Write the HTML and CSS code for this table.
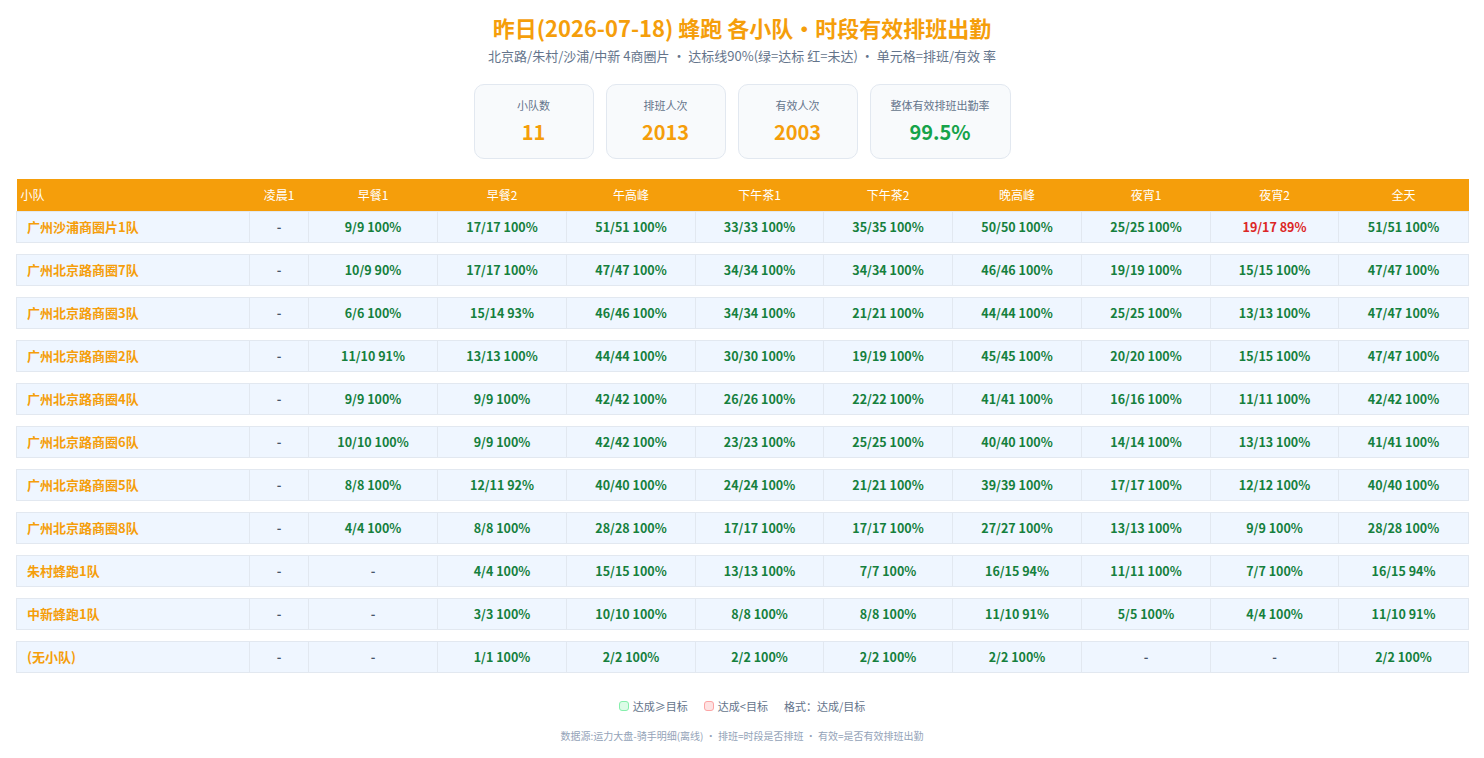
FILE: index.html
```html
<!DOCTYPE html>
<html lang="zh-CN">
<head>
<meta charset="utf-8">
<title>蜂跑 各小队・时段有效排班出勤</title>
<link rel="stylesheet" href="styles.css">
</head>
<body>
<div class="page">
  <header class="head">
    <h1 class="title">昨日(2026-07-18) 蜂跑 各小队・时段有效排班出勤</h1>
    <p class="sub">北京路/朱村/沙浦/中新 4商圈片 ・ 达标线90%(绿=达标 红=未达) ・ 单元格=排班/有效 率</p>
  </header>

  <section class="cards">
    <div class="card"><div class="card-label">小队数</div><div class="card-val">11</div></div>
    <div class="card"><div class="card-label">排班人次</div><div class="card-val">2013</div></div>
    <div class="card"><div class="card-label">有效人次</div><div class="card-val">2003</div></div>
    <div class="card wide"><div class="card-label">整体有效排班出勤率</div><div class="card-val good">99.5%</div></div>
  </section>

  <table class="grid">
    <colgroup>
      <col class="c-team"><col class="c-s"><col class="c-m"><col class="c-m"><col class="c-m"><col class="c-n"><col class="c-m"><col class="c-m"><col class="c-m"><col class="c-n"><col class="c-l">
    </colgroup>
    <thead>
      <tr>
        <th class="th-team">小队</th><th>凌晨1</th><th>早餐1</th><th>早餐2</th><th>午高峰</th><th>下午茶1</th><th>下午茶2</th><th>晚高峰</th><th>夜宵1</th><th>夜宵2</th><th>全天</th>
      </tr>
    </thead>
    <tbody>
      <tr><td class="team">广州沙浦商圈片1队</td><td class="na">-</td><td class="ok">9/9 100%</td><td class="ok">17/17 100%</td><td class="ok">51/51 100%</td><td class="ok">33/33 100%</td><td class="ok">35/35 100%</td><td class="ok">50/50 100%</td><td class="ok">25/25 100%</td><td class="bad">19/17 89%</td><td class="ok">51/51 100%</td></tr>
      <tr class="sp"><td colspan="11"></td></tr>
      <tr><td class="team">广州北京路商圈7队</td><td class="na">-</td><td class="ok">10/9 90%</td><td class="ok">17/17 100%</td><td class="ok">47/47 100%</td><td class="ok">34/34 100%</td><td class="ok">34/34 100%</td><td class="ok">46/46 100%</td><td class="ok">19/19 100%</td><td class="ok">15/15 100%</td><td class="ok">47/47 100%</td></tr>
      <tr class="sp"><td colspan="11"></td></tr>
      <tr><td class="team">广州北京路商圈3队</td><td class="na">-</td><td class="ok">6/6 100%</td><td class="ok">15/14 93%</td><td class="ok">46/46 100%</td><td class="ok">34/34 100%</td><td class="ok">21/21 100%</td><td class="ok">44/44 100%</td><td class="ok">25/25 100%</td><td class="ok">13/13 100%</td><td class="ok">47/47 100%</td></tr>
      <tr class="sp"><td colspan="11"></td></tr>
      <tr><td class="team">广州北京路商圈2队</td><td class="na">-</td><td class="ok">11/10 91%</td><td class="ok">13/13 100%</td><td class="ok">44/44 100%</td><td class="ok">30/30 100%</td><td class="ok">19/19 100%</td><td class="ok">45/45 100%</td><td class="ok">20/20 100%</td><td class="ok">15/15 100%</td><td class="ok">47/47 100%</td></tr>
      <tr class="sp"><td colspan="11"></td></tr>
      <tr><td class="team">广州北京路商圈4队</td><td class="na">-</td><td class="ok">9/9 100%</td><td class="ok">9/9 100%</td><td class="ok">42/42 100%</td><td class="ok">26/26 100%</td><td class="ok">22/22 100%</td><td class="ok">41/41 100%</td><td class="ok">16/16 100%</td><td class="ok">11/11 100%</td><td class="ok">42/42 100%</td></tr>
      <tr class="sp"><td colspan="11"></td></tr>
      <tr><td class="team">广州北京路商圈6队</td><td class="na">-</td><td class="ok">10/10 100%</td><td class="ok">9/9 100%</td><td class="ok">42/42 100%</td><td class="ok">23/23 100%</td><td class="ok">25/25 100%</td><td class="ok">40/40 100%</td><td class="ok">14/14 100%</td><td class="ok">13/13 100%</td><td class="ok">41/41 100%</td></tr>
      <tr class="sp"><td colspan="11"></td></tr>
      <tr><td class="team">广州北京路商圈5队</td><td class="na">-</td><td class="ok">8/8 100%</td><td class="ok">12/11 92%</td><td class="ok">40/40 100%</td><td class="ok">24/24 100%</td><td class="ok">21/21 100%</td><td class="ok">39/39 100%</td><td class="ok">17/17 100%</td><td class="ok">12/12 100%</td><td class="ok">40/40 100%</td></tr>
      <tr class="sp"><td colspan="11"></td></tr>
      <tr><td class="team">广州北京路商圈8队</td><td class="na">-</td><td class="ok">4/4 100%</td><td class="ok">8/8 100%</td><td class="ok">28/28 100%</td><td class="ok">17/17 100%</td><td class="ok">17/17 100%</td><td class="ok">27/27 100%</td><td class="ok">13/13 100%</td><td class="ok">9/9 100%</td><td class="ok">28/28 100%</td></tr>
      <tr class="sp"><td colspan="11"></td></tr>
      <tr><td class="team">朱村蜂跑1队</td><td class="na">-</td><td class="na">-</td><td class="ok">4/4 100%</td><td class="ok">15/15 100%</td><td class="ok">13/13 100%</td><td class="ok">7/7 100%</td><td class="ok">16/15 94%</td><td class="ok">11/11 100%</td><td class="ok">7/7 100%</td><td class="ok">16/15 94%</td></tr>
      <tr class="sp"><td colspan="11"></td></tr>
      <tr><td class="team">中新蜂跑1队</td><td class="na">-</td><td class="na">-</td><td class="ok">3/3 100%</td><td class="ok">10/10 100%</td><td class="ok">8/8 100%</td><td class="ok">8/8 100%</td><td class="ok">11/10 91%</td><td class="ok">5/5 100%</td><td class="ok">4/4 100%</td><td class="ok">11/10 91%</td></tr>
      <tr class="sp"><td colspan="11"></td></tr>
      <tr><td class="team">(无小队)</td><td class="na">-</td><td class="na">-</td><td class="ok">1/1 100%</td><td class="ok">2/2 100%</td><td class="ok">2/2 100%</td><td class="ok">2/2 100%</td><td class="ok">2/2 100%</td><td class="na">-</td><td class="na">-</td><td class="ok">2/2 100%</td></tr>
    </tbody>
  </table>

  <div class="legend">
    <span class="lg-item"><span class="sw sw-ok"></span>达成≥目标</span>
    <span class="lg-item"><span class="sw sw-bad"></span>达成&lt;目标</span>
    <span class="lg-item">格式：达成/目标</span>
  </div>
  <p class="foot">数据源:运力大盘-骑手明细(离线) ・ 排班=时段是否排班 ・ 有效=是否有效排班出勤</p>
</div>
</body>
</html>
```

FILE: styles.css
```css
* { box-sizing: border-box; }
html, body { margin: 0; padding: 0; background: #ffffff; }
body {
  font-family: "Noto Sans CJK SC", "Noto Sans", "Liberation Sans", sans-serif;
  color: #334155;
}
.page { padding: 11px 16px 16px; }

.head { text-align: center; }
.title {
  margin: 0;
  font-size: 22px;
  line-height: 32px;
  font-weight: 700;
  color: #f59e0b;
}
.sub {
  margin: 3px 0 0;
  font-size: 13px;
  line-height: 20px;
  color: #64748b;
}

.cards {
  display: flex;
  justify-content: center;
  gap: 12px;
  margin-top: 18px;
}
.card {
  width: 120px;
  height: 75px;
  background: #f8fafc;
  border: 1px solid #e2e8f0;
  border-radius: 10px;
  text-align: center;
  padding-top: 11px;
}
.card.wide { width: 141px; }
.card-label { font-size: 11px; line-height: 18px; color: #64748b; }
.card-val { font-size: 20px; line-height: 28px; font-weight: 700; color: #f59e0b; margin-top: 4px; }
.card-val.good { color: #16a34a; }

.grid {
  width: 1452px;
  margin-top: 20px;
  table-layout: fixed;
  border-collapse: collapse;
  font-size: 12px;
}
.c-team { width: 233px; }
.c-s { width: 59px; }
.c-m { width: 129px; }
.c-n { width: 128px; }
.c-l { width: 130px; }

.grid th {
  background: #f59e0b;
  color: #ffffff;
  font-weight: 400;
  height: 32px;
  padding: 0;
  text-align: center;
  font-size: 12px;
}
.grid th.th-team { text-align: left; padding-left: 4px; }

.grid td {
  background: #eff6ff;
  border: 1px solid #e2e8f0;
  height: 31px;
  padding: 0;
  text-align: center;
  font-weight: 700;
  font-size: 12.5px;
}
.grid td.team {
  text-align: left;
  padding-left: 10px;
  color: #f59e0b;
  font-size: 13px;
}
.grid td.ok { color: #15803d; }
.grid td.bad { color: #dc2626; }
.grid td.na { color: #475569; font-weight: 700; }
.grid tr.sp td {
  height: 12px;
  background: transparent;
  border-left: none;
  border-right: none;
}

.legend {
  display: flex;
  justify-content: center;
  gap: 16px;
  margin-top: 25px;
  font-size: 11px;
  line-height: 16px;
  color: #64748b;
}
.lg-item { display: inline-flex; align-items: center; }
.sw {
  display: inline-block;
  width: 10px;
  height: 10px;
  border-radius: 3px;
  margin-right: 4px;
}
.sw-ok { background: #dcfce7; border: 1px solid #86efac; }
.sw-bad { background: #fee2e2; border: 1px solid #fca5a5; }

.foot {
  margin: 14px 0 0;
  text-align: center;
  font-size: 10px;
  line-height: 15px;
  color: #94a3b8;
}
```
